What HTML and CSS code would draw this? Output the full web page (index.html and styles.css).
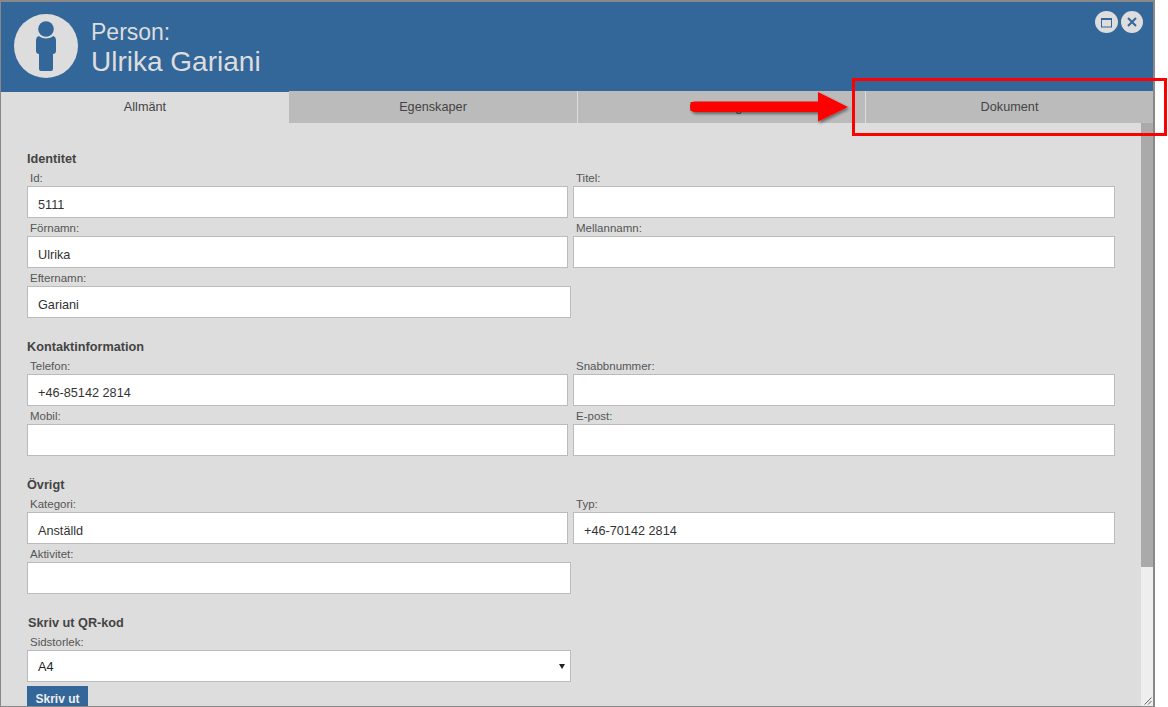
FILE: index.html
```html
<!DOCTYPE html>
<html lang="sv">
<head>
<meta charset="utf-8">
<title>Person: Ulrika Gariani</title>
<link rel="stylesheet" href="styles.css">
</head>
<body>
<div class="window">
  <header class="head">
    <div class="avatar">
      <svg viewBox="0 0 64 64" width="64" height="64"><circle cx="32" cy="32" r="32" fill="#dddddd"/><circle cx="32" cy="15" r="7.800" fill="#336699"/><path d="M24.500 22Q32 27 39.500 22Q42 23 42 26V37Q42 39.500 39 40V55Q39 57 37 57H27Q25 57 25 55V40Q22 39.500 22 37V26Q22 23 24.500 22Z" fill="#336699"/></svg>
    </div>
    <div class="titles">
      <div class="kind">Person:</div>
      <div class="name">Ulrika Gariani</div>
    </div>
    <div class="controls">
      <button class="round" aria-label="Maximera"><svg viewBox="0 0 23 23" width="23" height="23"><rect x="6.500" y="7.500" width="10" height="8.500" fill="none" stroke="#336699" stroke-width="1"/><rect x="6" y="7" width="11" height="2" fill="#336699"/></svg></button>
      <button class="round" aria-label="Stäng"><svg viewBox="0 0 22 22" width="22" height="22"><path d="M7 7L15 15M15 7L7 15" stroke="#336699" stroke-width="2" fill="none"/></svg></button>
    </div>
  </header>
  <nav class="tabs">
    <div class="tab active">Allmänt</div>
    <div class="tab">Egenskaper</div>
    <div class="tab">Placeringar</div>
    <div class="tab">Dokument</div>
  </nav>
  <div class="body">
    <main class="form">
      <section class="group">
        <h2>Identitet</h2>
        <div class="grid">
          <div class="field"><label>Id:</label><div class="input">5111</div></div>
          <div class="field"><label>Titel:</label><div class="input"></div></div>
          <div class="field"><label>Förnamn:</label><div class="input">Ulrika</div></div>
          <div class="field"><label>Mellannamn:</label><div class="input"></div></div>
          <div class="field wide"><label>Efternamn:</label><div class="input">Gariani</div></div>
        </div>
      </section>
      <section class="group">
        <h2>Kontaktinformation</h2>
        <div class="grid">
          <div class="field"><label>Telefon:</label><div class="input">+46-85142 2814</div></div>
          <div class="field"><label>Snabbnummer:</label><div class="input"></div></div>
          <div class="field"><label>Mobil:</label><div class="input"></div></div>
          <div class="field"><label>E-post:</label><div class="input"></div></div>
        </div>
      </section>
      <section class="group">
        <h2>Övrigt</h2>
        <div class="grid">
          <div class="field"><label>Kategori:</label><div class="input">Anställd</div></div>
          <div class="field"><label>Typ:</label><div class="input">+46-70142 2814</div></div>
          <div class="field wide"><label>Aktivitet:</label><div class="input"></div></div>
        </div>
      </section>
      <section class="group">
        <h2 class="qr">Skriv ut QR-kod</h2>
        <div class="grid">
          <div class="field wide"><label>Sidstorlek:</label><div class="input select">A4<span class="caret"></span></div></div>
        </div>
        <button class="print">Skriv ut</button>
      </section>
    </main>
    <div class="scrollbar"><div class="thumb"></div></div>
    <svg class="grip" viewBox="0 0 8 8" width="8" height="8"><path d="M0.500 7.500L7.500 0.500M4 7.500L7.500 4" stroke="#666" stroke-width="1" fill="none"/></svg>
  </div>
</div>
<svg class="arrow" viewBox="0 0 160 40" width="160" height="40"><defs><filter id="s" x="-10%" y="-30%" width="125%" height="170%"><feDropShadow dx="1.500" dy="2" stdDeviation="1.500" flood-color="#000" flood-opacity="0.450"/></filter></defs><path d="M5 9.500H128V0L158 15L128 29.500V20H5Q0 20 0 14.750Q0 9.500 5 9.500Z" fill="#ff0000" filter="url(#s)"/></svg>
<div class="redbox"></div>
</body>
</html>
```
FILE: styles.css
```css
* { box-sizing: border-box; }
html, body { margin: 0; height: 707px; overflow: hidden; background: #fff; }
body { font-family: "Liberation Sans", Arial, sans-serif; color: #444; }
.window { width: 1155px; height: 707px; border: 1px solid #888; border-top-width: 2px; border-right-width: 2px; display: flex; flex-direction: column; background: #dddddd; overflow: hidden; }
.head { height: 90px; flex: none; background: #336699; display: flex; padding: 12px 0 0 13px; }
.avatar { width: 64px; height: 64px; flex: none; }
.titles { margin-left: 13px; color: #dddddd; padding-top: 4px; }
.kind { font-size: 23px; line-height: 28px; }
.name { font-size: 28px; line-height: 32px; }
.controls { margin: -3px 10px 0 auto; display: flex; gap: 3px; height: 23px; }
.round { width: 23px; height: 22px; padding: 0; border: 0; border-radius: 50%; background: #dddddd; display: flex; align-items: center; justify-content: center; }
.round + .round { width: 22px; height: 22px; }
.tabs { display: grid; grid-template-columns: 288px 288px 288px 288px; grid-template-rows: 31px; height: 31px; flex: none; background: #dddddd; }
.tab { height: 32px; font-size: 12.700px; line-height: 33px; margin-top: -1px; text-align: center; background: #bbbbbb; border-left: 1px solid #dddddd; color: #444; }
.tab.active { height: 31px; background: #dddddd; border-left: 0; margin-top: 0; line-height: 30px; }
.tab:nth-child(2) { border-left: 0; }
.body { flex: 1; display: flex; min-height: 0; position: relative; }
.form { width: 1140px; flex: none; padding: 29px 0 0 26px; overflow: hidden; }
.group { margin-bottom: 18px; }
h2 { margin: 0 0 6px; font-size: 12.700px; line-height: 14px; font-weight: bold; color: #444; height: 14px; }
.qr { margin-left: 1px; }
.grid { display: grid; grid-template-columns: 541px 542px; column-gap: 5px; }
.field { height: 50px; }
.field.wide { width: 544px; }
label { display: block; height: 14px; font-size: 11.500px; line-height: 13px; padding-left: 3px; color: #555; }
.input { height: 32px; background: #fff; border: 1px solid #bbb; font-size: 12.700px; line-height: 36px; padding-left: 10px; color: #333; position: relative; }
.select { color: #222; line-height: 33px; }
.caret { position: absolute; right: 5px; top: 13px; width: 0; height: 0; border-left: 3px solid transparent; border-right: 3px solid transparent; border-top: 5px solid #222; }
.print { display: block; width: 61px; height: 30px; padding: 0 0 4px; border: 0; background: #336699; color: #eee; font: bold 12px "Liberation Sans", Arial, sans-serif; text-align: center; line-height: 14px; }
.scrollbar { width: 13px; flex: none; background: #eeeeee; }
.thumb { height: 444px; background: #aaaaaa; }
.grip { position: absolute; right: 1px; bottom: 1px; }
.arrow { position: absolute; left: 690px; top: 92px; overflow: visible; }
.redbox { position: absolute; left: 852px; top: 78px; width: 315px; height: 58px; border: 3px solid #ff0000; }
```
